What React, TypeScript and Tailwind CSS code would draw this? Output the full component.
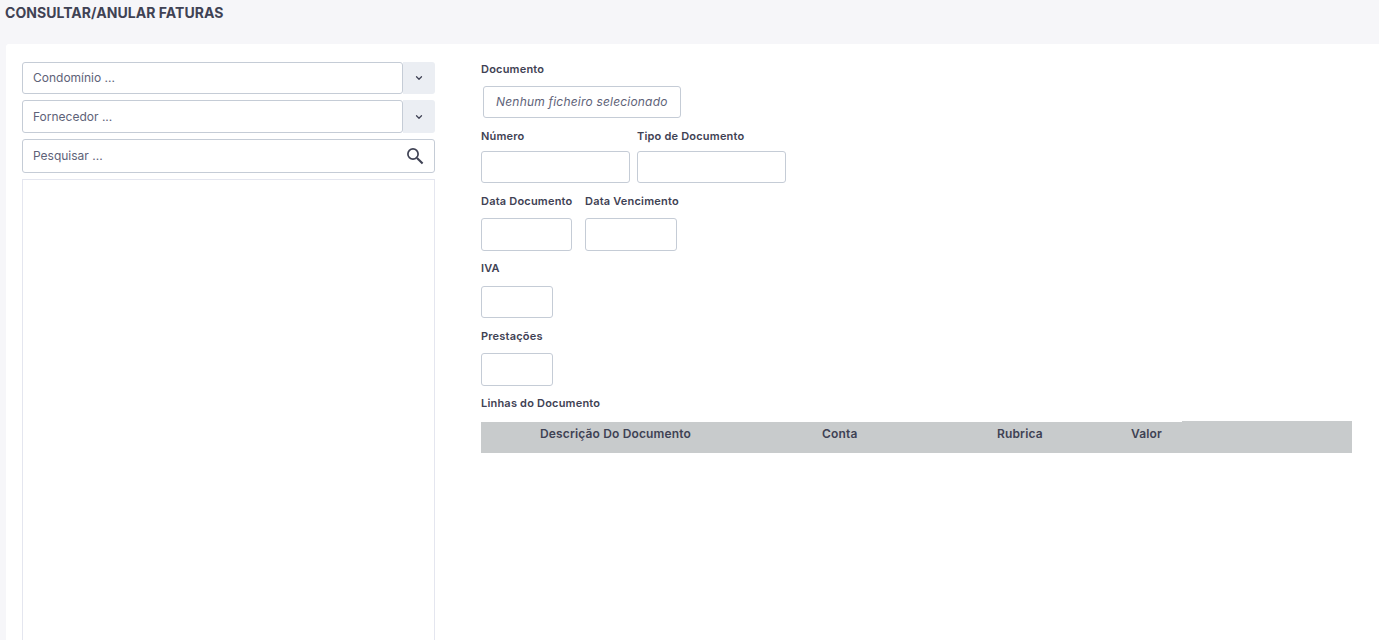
import { ChevronDown } from 'lucide-react';

const inputCls = "h-[32px] rounded-[3px] border border-[#c5ccd6] bg-white"
const labelCls = "text-[11px] leading-[16px] font-semibold text-[#3f4254] tracking-[0.2px]"

function Combo (props:any) {
    return (
        <div className={`flex shrink-0 ${props.h}`}>
            <div className="flex flex-1 items-center rounded-[3px] border border-[#c5ccd6] bg-white pl-[10px] text-[12px] text-[#5e6278]">
                {props.text}
            </div>
            <div className="flex w-[32px] items-center justify-center rounded-r-[3px] bg-[#ebeef3] text-[#3f4254]">
                <ChevronDown size={10} strokeWidth={3} />
            </div>
        </div>
    )
}

function App () {
    return (
        <div className="flex h-screen flex-col overflow-hidden bg-[#f6f6f9] font-['Inter','Liberation_Sans',sans-serif]">
            <div className="h-[44px] shrink-0 pl-[5px] pt-[4px]">
                <h1 className="text-[14px] leading-[17px] font-bold tracking-[0.05px] text-[#3f4254]">CONSULTAR/ANULAR FATURAS</h1>
            </div>
            <div className="ml-[6px] flex min-h-0 flex-1 rounded-tl-[3px] bg-white pl-[16px] pt-[18px]">
                <div className="flex w-[413px] flex-col">
                    <Combo h="h-[32px]" text="Condomínio ..." />
                    <div className="mt-[6px] shrink-0">
                        <Combo h="h-[33px]" text="Fornecedor ..." />
                    </div>
                    <div className="mt-[6px] flex h-[34px] shrink-0 items-center justify-between rounded-[3px] border border-[#c5ccd6] pl-[10px] pr-[10px] text-[12px] text-[#5e6278]">
                        <span>Pesquisar ...</span>
                        <svg width="18" height="18" viewBox="0 0 18 18" fill="none" className="text-[#3f4254]">
                            <circle cx="7" cy="7" r="5.1" stroke="currentColor" strokeWidth="1.7" />
                            <path d="M11 11 L16.6 16.6" stroke="currentColor" strokeWidth="2.1" />
                        </svg>
                    </div>
                    <div className="mt-[6px] h-[700px] shrink-0 border border-[#e4e6ef]"></div>
                </div>

                <div className="ml-[46px] w-[871px]">
                    <div className={`${labelCls} mt-[-1px]`}>Documento</div>
                    <div className={`${inputCls} ml-[2px] mt-[9px] flex w-[198px] items-center pl-[12px] text-[12px] italic tracking-[0.2px] text-[#5e6278]`}>
                        Nenhum ficheiro selecionado
                    </div>

                    <div className="mt-[10px] flex gap-[7px]">
                        <div>
                            <div className={labelCls}>Número</div>
                            <div className={`${inputCls} mt-[7px] w-[149px]`}></div>
                        </div>
                        <div>
                            <div className={labelCls}>Tipo de Documento</div>
                            <div className={`${inputCls} mt-[7px] w-[149px]`}></div>
                        </div>
                    </div>

                    <div className="mt-[10px] flex gap-[13px]">
                        <div>
                            <div className={`${labelCls} w-[91px] whitespace-nowrap`}>Data Documento</div>
                            <div className={`${inputCls} mt-[9px] h-[33px] w-[91px]`}></div>
                        </div>
                        <div>
                            <div className={`${labelCls} whitespace-nowrap`}>Data Vencimento</div>
                            <div className={`${inputCls} mt-[9px] h-[33px] w-[92px]`}></div>
                        </div>
                    </div>

                    <div className="mt-[9px]">
                        <div className={labelCls}>IVA</div>
                        <div className={`${inputCls} mt-[10px] w-[72px]`}></div>
                    </div>

                    <div className="mt-[10px]">
                        <div className={labelCls}>Prestações</div>
                        <div className={`${inputCls} mt-[9px] h-[33px] w-[72px]`}></div>
                    </div>

                    <div className={`${labelCls} mt-[9px]`}>Linhas do Documento</div>

                    <div className="mt-[10px] bg-[#c8cbcc]">
                        <table className="w-[701px] table-fixed border-t border-white text-left text-[12px] font-semibold tracking-[0.15px] text-[#3f4254]">
                            <thead>
                                <tr className="h-[31px] align-top">
                                    <th className="w-[341px] pl-[59px] pt-[3px] font-semibold">Descrição Do Documento</th>
                                    <th className="w-[175px] pt-[3px] font-semibold">Conta</th>
                                    <th className="w-[134px] pt-[3px] font-semibold">Rubrica</th>
                                    <th className="pt-[3px] font-semibold">Valor</th>
                                </tr>
                            </thead>
                        </table>
                    </div>
                </div>
            </div>
        </div>
    );
};

export default App
